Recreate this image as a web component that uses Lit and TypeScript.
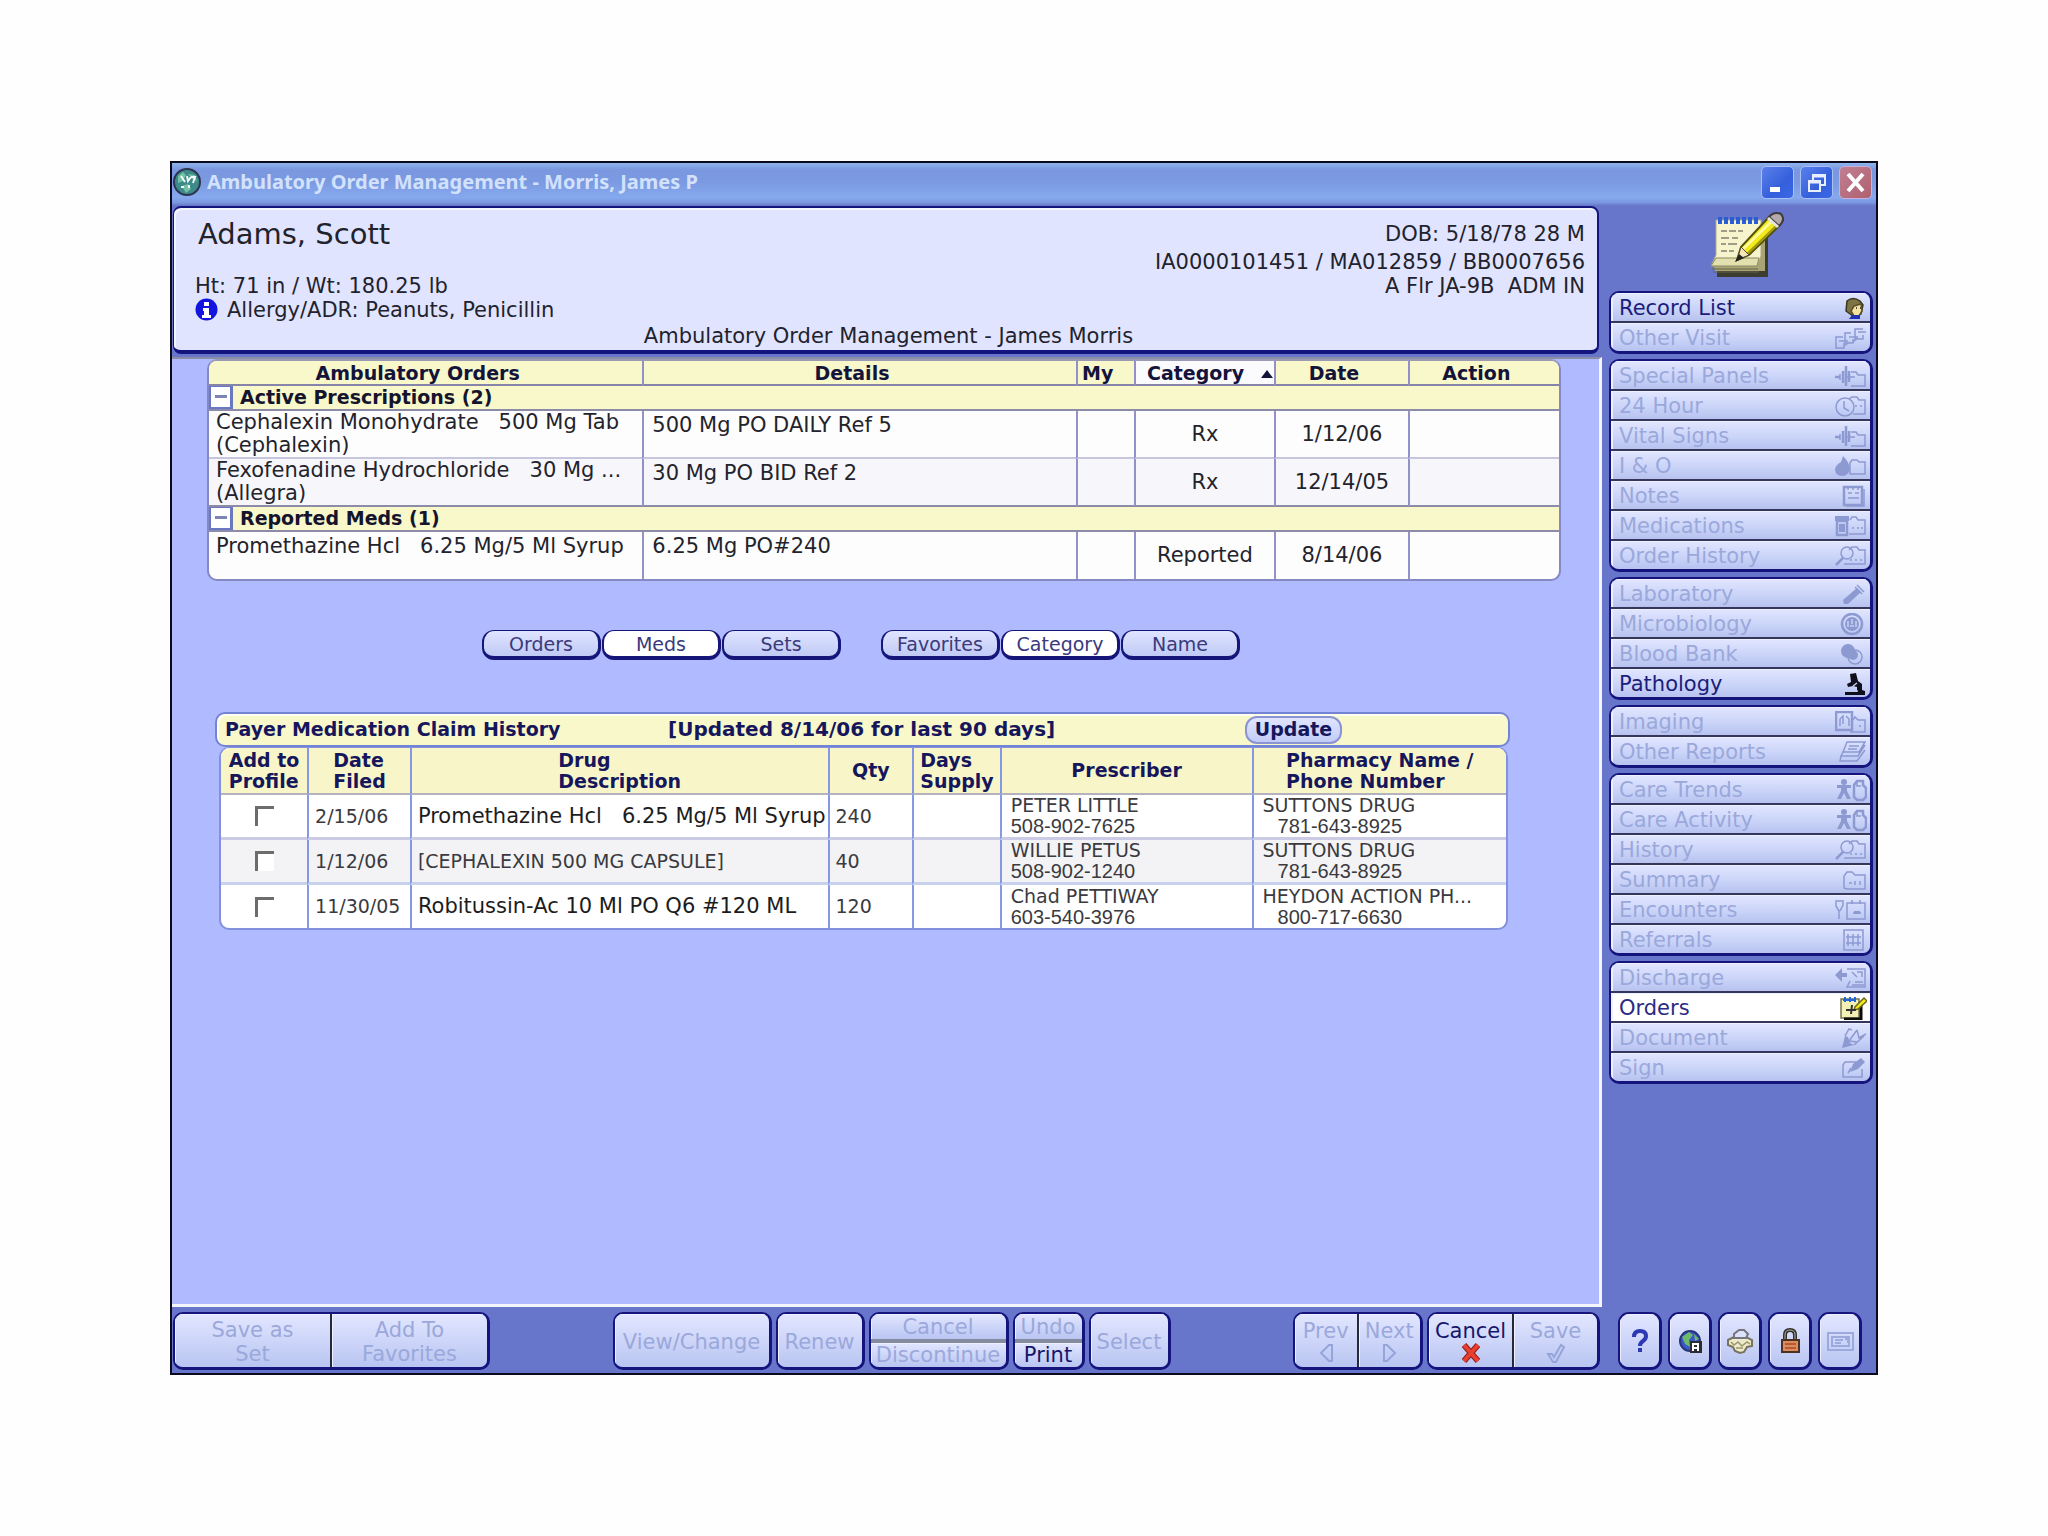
import { LitElement, html, css, svg, nothing, TemplateResult } from "lit";
import { customElement, property } from "lit/decorators.js";
import { classMap } from "lit/directives/class-map.js";

const folder = svg`<path d="M15 19V8l2-3h5l2 2h6v12z" />`;
const person = svg`<g class="fill"><circle cx="9" cy="3" r="3" /><path d="M2 6h14v3h-4v3l4 8h-4l-3-6-3 6H2l4-8V9H2z" /></g><path class="thick" d="M19 6l3-4h6v4l3 3v9l-3 3h-6l-3-3z" /><path d="M22 2v5h4" />`;
const pulse = svg`<path class="thick" d="M0 12h5M8 6v12M11 1v20M14 6v11" /><path d="M5 9v6M11 12h9" /><path d="M16 7h5l2 3h7v11H16" />`;
const lens = svg`<circle cx="12" cy="8" r="6" /><path class="thick" d="M8 13l-7 7" /><path d="M14 5l3-3h5l2 3h6v14H9M15 15h2M20 15h2M25 15h2" />`;

const NAV_ICONS: Record<string, TemplateResult> = {
  face: svg`<path d="M12 4q6-5 13 0l3 4-2 9-8 2-7-5z" fill="#7c7444" stroke="#3c361c" /><path d="M19 9l7-2 1 7-3 5h-5l-3-5z" fill="#f3e2a0" stroke="#5c5028" /><path d="M14 22l3-4h8v4z" fill="#2030b0" stroke="none" /><path d="M21 11h1M25 11h1" stroke="#222" />`,
  visits: svg`<path d="M8 10H1v11h8v-5M16 6h-6v10h8v-4M28 2h-8v10h8V8M4 14h9M14 10h9M23 5h8M9 19l6-4M18 15l5-4" />`,
  pulse,
  clock: svg`<circle cx="10" cy="12" r="9" /><path d="M9 6v7l5 3" /><path d="M14 4l3-2h5l2 3h6v14H18M20 11h2M25 11h2" />`,
  drop: svg`<path class="fill" d="M8 1q6 6 7 12-1 8-8 8T0 14q1-4 6-7z" />${folder}`,
  note: svg`<path class="thick" d="M9 2h18v18H9z" /><path d="M29 4v17H11M13 8h4M20 8h4M13 13h11M13 1v4M18 1v4M23 1v4" />`,
  bottle: svg`<path class="fill" d="M0 1h14v5H0z" /><path class="thick" d="M2 6h10v14H2zM4 10h6" /><path class="fill" d="M4 11h6v6H4z" /><path d="M14 19h16V5h-7l-2-3h-4l-2 3M17 13h2M22 13h2M26 13h2" />`,
  lens,
  tube: svg`<path class="fill" d="M22 5l4 4-13 12h-4l-1-4z" /><path d="M20 4l7 7M22 2l7 7M12 16l8-8" />`,
  dish: svg`<circle class="thick" cx="17" cy="11" r="10" /><circle class="fill" cx="17" cy="11" r="7" /><path class="cut" d="M13 8v6M17 6v5M21 8v6M15 13h4" />`,
  cells: svg`<circle class="fill" cx="13" cy="8" r="7" /><circle cx="20" cy="14" r="7" /><circle class="fill" cx="18" cy="12" r="5" />`,
  scope: svg`<path d="M15 1l6-1 2 8 4 3v6l3 1v4H10v-3h12v-5l-4-1-5 1-1-3 4-2z" fill="#10101c" stroke="none" /><path d="M18 13l4-3M17 18h6" stroke="#c8cdea" />`,
  scan: svg`<path class="thick" d="M1 1h16v18H1z" /><path d="M5 15V8l3-3v8M11 5l3 3v7" /><path d="M18 9l2-3 3 3h7v12H15" /><path d="M24 15h2" />`,
  papers: svg`<path d="M12 1h18l-6 10H8zM8 11l-2 4h17l7-11M6 15l-1 5h17l8-11M14 5h10M13 8h9" />`,
  person,
  summary: svg`<path d="M9 19V7l3-4h5l3 3h10v14H12zM14 14h3M20 12v4M25 12v4" />`,
  encounter: svg`<path d="M1 1v6l3 5v8M8 1v5l-3 6M2 2h5M12 4h18v16H12zM17 1v4M25 1v4M18 14h8" /><path class="fill" d="M19 12h6v3h-6z" />`,
  grid: svg`<path d="M9 1h19v20H9zM13 5v12M18 5v12M23 5v12M11 8h15M11 14h15" />`,
  leave: svg`<path class="fill" d="M0 8l7-7v5h5v4H7v5z" /><path d="M12 2h18v18H12l3-6M17 5l5 5M22 5h5v5M20 15h8M17 18h12" />`,
  orders: svg`<path d="M6 2h18v19H6z" fill="#f2f0b4" stroke="#77744c" /><path d="M9 22h17V8" stroke="#0c0c0c" stroke-width="3" /><path d="M8 3h13M10 0v5M15 0v5M20 0v5" stroke="#2466d8" stroke-width="2" /><path d="M29 1l3 3-9 8-4 1 1-3z" fill="#f5ee18" stroke="#6c6820" /><path d="M11 13h10M17 8l-1 9" stroke="#333" stroke-width="2" />`,
  pen: svg`<path class="fill" d="M7 21l3-12 3 1 2 6 4 2z" /><path d="M10 9l4-7 3 1M14 14l8-11M19 18l10-9M22 3l2 8 7-4M14 14l8 1" />`,
  sign: svg`<path d="M22 5H10l-2 3v12h19V12M13 16l3-5" /><path class="fill" d="M15 15l3-8 8-6 4 4-7 7z" />`,
};

@customElement("nav-icon")
class NavIcon extends LitElement {
  @property() name = "";
  static styles = css`
    :host { display: block; width: 32px; height: 23px; flex: none; }
    svg { display: block; width: 32px; height: 23px; fill: none; stroke: #8d9ad2; stroke-width: 1.5; }
    .fill { fill: #8d9ad2; stroke: none; }
    .thick { stroke-width: 2.5; }
    .cut { stroke: #c6cff6; }
  `;
  render() {
    return html`<svg viewBox="0 0 32 23" aria-hidden="true">${NAV_ICONS[this.name]}</svg>`;
  }
}

type NavItem = { label: string; icon: string; state?: "on" | "current" };
const NAV: NavItem[][] = [
  [{ label: "Record List", icon: "face", state: "on" }, { label: "Other Visit", icon: "visits" }],
  [
    { label: "Special Panels", icon: "pulse" },
    { label: "24 Hour", icon: "clock" },
    { label: "Vital Signs", icon: "pulse" },
    { label: "I & O", icon: "drop" },
    { label: "Notes", icon: "note" },
    { label: "Medications", icon: "bottle" },
    { label: "Order History", icon: "lens" },
  ],
  [
    { label: "Laboratory", icon: "tube" },
    { label: "Microbiology", icon: "dish" },
    { label: "Blood Bank", icon: "cells" },
    { label: "Pathology", icon: "scope", state: "on" },
  ],
  [{ label: "Imaging", icon: "scan" }, { label: "Other Reports", icon: "papers" }],
  [
    { label: "Care Trends", icon: "person" },
    { label: "Care Activity", icon: "person" },
    { label: "History", icon: "lens" },
    { label: "Summary", icon: "summary" },
    { label: "Encounters", icon: "encounter" },
    { label: "Referrals", icon: "grid" },
  ],
  [
    { label: "Discharge", icon: "leave" },
    { label: "Orders", icon: "orders", state: "current" },
    { label: "Document", icon: "pen" },
    { label: "Sign", icon: "sign" },
  ],
];

@customElement("side-nav")
class SideNav extends LitElement {
  static styles = css`
    :host { display: flex; flex-direction: column; gap: 5px; font-family: "DejaVu Sans", Verdana, sans-serif; }
    .group {
      display: flex; flex-direction: column; overflow: hidden;
      border: solid #14147c; border-width: 2px 3px 3px 2px; border-radius: 10px;
    }
    .item {
      display: flex; align-items: center; justify-content: space-between;
      box-sizing: border-box; height: 30px; margin: 0; padding: 2px 3px 0 8px;
      border: 0; border-bottom: 2px solid #34365c;
      background: linear-gradient(#e2e6ff, #c9d3f8 60%, #b7c2ef);
      box-shadow: inset 2px 1px #eef0ff;
      font: inherit; font-size: 21px; line-height: 24px; color: #9ba8db; white-space: nowrap;
    }
    .item:last-child { height: 28px; border-bottom: 0; }
    .on { color: #1c1c7a; }
    .current { background: #fff; color: #2a2a84; }
  `;
  render() {
    return NAV.map(
      (group) => html`<div class="group">
        ${group.map(
          (i) => html`<button
            class=${classMap({ item: true, on: i.state === "on", current: i.state === "current" })}
            ?disabled=${!i.state}
          ><span>${i.label}</span><nav-icon name=${i.icon}></nav-icon></button>`,
        )}
      </div>`,
    );
  }
}

type Order = { name: string; alias?: string; details: string; category: string; date: string };
const ORDER_GROUPS: { title: string; rows: Order[] }[] = [
  {
    title: "Active Prescriptions (2)",
    rows: [
      { name: "Cephalexin Monohydrate   500 Mg Tab", alias: "(Cephalexin)", details: "500 Mg PO DAILY Ref 5", category: "Rx", date: "1/12/06" },
      { name: "Fexofenadine Hydrochloride   30 Mg ...", alias: "(Allegra)", details: "30 Mg PO BID Ref 2", category: "Rx", date: "12/14/05" },
    ],
  },
  {
    title: "Reported Meds (1)",
    rows: [{ name: "Promethazine Hcl   6.25 Mg/5 Ml Syrup", details: "6.25 Mg PO#240", category: "Reported", date: "8/14/06" }],
  },
];

@customElement("orders-table")
class OrdersTable extends LitElement {
  static styles = css`
    :host { display: block; font-family: "DejaVu Sans", Verdana, sans-serif; font-size: 21px; line-height: 23px; color: #23232b; }
    .frame { border: 2px solid #8488c4; border-top-color: #9a9ab4; border-radius: 10px; overflow: hidden; background: #fdfdfd; }
    table { width: 100%; table-layout: fixed; border-collapse: separate; border-spacing: 0; }
    .c-name { width: 32.1%; } .c-details { width: 32.1%; } .c-my { width: 4.3%; }
    .c-cat { width: 10.4%; } .c-date { width: 9.9%; } .c-act { width: 11.2%; }
    th, td { box-sizing: border-box; padding: 0; }
    thead th {
      height: 25px; padding: 2px 16px 0 0; background: #f8f8ca; color: #14143a;
      border-bottom: 2px solid #8684a8; font-size: 19px; line-height: 21px; font-weight: 700; white-space: nowrap;
    }
    thead .sorted { padding-right: 0; background: #fbfbfe; }
    .sort { display: flex; align-items: center; justify-content: flex-end; gap: 17px; width: 100%; margin: 0; padding: 0 1px; border: 0; background: none; font: inherit; color: inherit; }
    .sort svg { width: 12px; height: 8px; }
    .group th { height: 25px; background: #f8f8ca; border-bottom: 2px solid #8c8ca8; font-size: 19px; line-height: 21px; text-align: left; color: #14142c; }
    .title { display: flex; align-items: center; gap: 7px; height: 23px; }
    .toggle {
      box-sizing: border-box; width: 24px; height: 23px; margin: 0; padding: 0;
      display: flex; align-items: center; justify-content: center;
      border: solid #6a78c4; border-width: 1px 3px 2px 2px; background: #fff;
    }
    .toggle svg { width: 12px; height: 4px; }
    tbody td { height: 48px; vertical-align: middle; text-align: center; border-bottom: 2px solid #c6c6dc; }
    .last td { border-bottom-color: #8c8ca8; }
    .end td { height: 47px; border-bottom: 0; }
    .alt td { background: #f7f7fb; }
    thead th + th, tbody td + td { border-left: 2px solid #9292c8; }
    tbody .text { text-align: left; vertical-align: top; white-space: pre; overflow: hidden; }
    .two { height: 46px; padding-left: 7px; overflow: hidden; }
    .one { padding: 3px 0 0 8px; }
    .two.one { height: 43px; padding-left: 7px; }
  `;
  render() {
    return html`<div class="frame"><table>
      <colgroup><col class="c-name" /><col class="c-details" /><col class="c-my" /><col class="c-cat" /><col class="c-date" /><col class="c-act" /></colgroup>
      <thead><tr>
        <th scope="col">Ambulatory Orders</th><th scope="col">Details</th><th scope="col">My</th>
        <th scope="col" class="sorted" aria-sort="ascending"><button class="sort">Category<svg viewBox="0 0 12 8" aria-hidden="true"><path d="M6 0l6 8H0z" fill="#14143a" /></svg></button></th>
        <th scope="col">Date</th><th scope="col">Action</th>
      </tr></thead>
      ${ORDER_GROUPS.map(
        (g, gi) => html`<tbody>
          <tr class="group"><th colspan="6" scope="rowgroup"><div class="title">
            <button class="toggle" aria-label="Collapse ${g.title}"><svg viewBox="0 0 12 4" aria-hidden="true"><path d="M0 0h12v3H0z" fill="#7c84b8" /></svg></button>${g.title}
          </div></th></tr>
          ${g.rows.map(
            (r, i) => html`<tr class=${classMap({ alt: i % 2 === 1, last: i === g.rows.length - 1, end: gi === ORDER_GROUPS.length - 1 && i === g.rows.length - 1 })}>
              <td class="text"><div class=${r.alias ? "two" : "two one"}>${r.name}${r.alias ? html`<br />${r.alias}` : nothing}</div></td>
              <td class="text"><div class="one">${r.details}</div></td>
              <td></td><td>${r.category}</td><td>${r.date}</td><td></td>
            </tr>`,
          )}
        </tbody>`,
      )}
    </table></div>`;
  }
}

const CLAIMS = [
  { date: "2/15/06", drug: "Promethazine Hcl   6.25 Mg/5 Ml Syrup", qty: "240", doctor: "PETER LITTLE", phone: "508-902-7625", shop: "SUTTONS DRUG", shopPhone: "781-643-8925" },
  { date: "1/12/06", drug: "[CEPHALEXIN 500 MG CAPSULE]", small: true, qty: "40", doctor: "WILLIE PETUS", phone: "508-902-1240", shop: "SUTTONS DRUG", shopPhone: "781-643-8925" },
  { date: "11/30/05", drug: "Robitussin-Ac 10 Ml PO Q6 #120 ML", qty: "120", doctor: "Chad PETTIWAY", phone: "603-540-3976", shop: "HEYDON ACTION PH...", shopPhone: "800-717-6630" },
];

@customElement("claim-history")
class ClaimHistory extends LitElement {
  static styles = css`
    :host { display: block; font-family: "DejaVu Sans", Verdana, sans-serif; font-size: 19px; line-height: 21px; color: #3a3a40; }
    .bar {
      display: flex; align-items: center; box-sizing: border-box; height: 35px; padding: 0 166px 0 8px;
      border: 2px solid #7484d4; border-radius: 10px; background: #f8f8ca; box-shadow: inset 2px 2px #fdfdf0;
      font-weight: 700; color: #16165c; white-space: nowrap;
    }
    h2 { margin: 0; font: inherit; width: 443px; }
    .upd { flex: 1; font-size: 20px; }
    .update {
      box-sizing: border-box; height: 28px; width: 97px; margin: 0; padding: 0; border: 2px solid #8a94d4; border-radius: 12px;
      background: linear-gradient(#e0e5ff, #c2ccf6); font: inherit; color: #16165c;
    }
    .frame { margin: 0 2px 0 4px; border: 2px solid #8390de; border-top-width: 1px; border-radius: 10px; overflow: hidden; background: #fff; }
    table { width: 100%; table-layout: fixed; border-collapse: separate; border-spacing: 0; }
    .k-add { width: 6.7%; } .k-date { width: 8%; } .k-drug { width: 32.5%; } .k-qty { width: 6.6%; }
    .k-days { width: 6.8%; } .k-doc { width: 19.6%; } .k-shop { width: 19.8%; }
    th, td { box-sizing: border-box; padding: 0; white-space: pre; }
    th { height: 47px; background: #f8f6c8; border-bottom: 2px solid #b4b2bc; color: #16165c; font-weight: 700; }
    th span { display: inline-block; text-align: left; }
    td { height: 45px; border-bottom: 3px solid #cccbe6; }
    tr:last-child td { height: 43px; border-bottom: 0; }
    tr:nth-child(even) td { background: #f3f3f5; border-bottom-color: #c8d2ec; }
    thead th + th, tbody td + td { border-left: 2px solid #8498e4; }
    td.pick { text-align: center; }
    .date { padding-left: 6px; }
    .drug, .qty { padding-left: 6px; }
    .doc, .shop { padding-left: 9px; }
    .large { font-size: 21px; color: #1c1c20; }
    .phone { font-family: "Liberation Sans", Arial, sans-serif; font-size: 20px; }
    .shop .phone { padding-left: 15px; }
    .tick {
      appearance: none; display: block; box-sizing: border-box; width: 19px; height: 20px; margin: 0 auto;
      border: solid #6c6c6c; border-width: 3px 0 0 3px; background: #fff;
    }
  `;
  render() {
    return html`
      <div class="bar"><h2>Payer Medication Claim History</h2><span class="upd">[Updated 8/14/06 for last 90 days]</span><button class="update">Update</button></div>
      <div class="frame"><table>
        <colgroup><col class="k-add" /><col class="k-date" /><col class="k-drug" /><col class="k-qty" /><col class="k-days" /><col class="k-doc" /><col class="k-shop" /></colgroup>
        <thead><tr>
          ${[["Add to", "Profile"], ["Date", "Filed"], ["Drug", "Description"], ["Qty"], ["Days", "Supply"], ["Prescriber"], ["Pharmacy Name /", "Phone Number"]].map(
            (h) => html`<th scope="col"><span>${h[0]}${h[1] ? html`<br />${h[1]}` : nothing}</span></th>`,
          )}
        </tr></thead>
        <tbody>${CLAIMS.map(
          (c) => html`<tr>
            <td class="pick"><input class="tick" type="checkbox" aria-label="Add ${c.drug} to profile" /></td>
            <td class="date">${c.date}</td>
            <td class=${c.small ? "drug" : "drug large"}>${c.drug}</td>
            <td class="qty">${c.qty}</td><td></td>
            <td class="doc"><div>${c.doctor}</div><div class="phone">${c.phone}</div></td>
            <td class="shop"><div>${c.shop}</div><div class="phone">${c.shopPhone}</div></td>
          </tr>`,
        )}</tbody>
      </table></div>`;
  }
}

@customElement("app-root")
class AppRoot extends LitElement {
  static styles = css`
    :host {
      display: block; box-sizing: border-box; min-height: 100vh; padding: 161px 170px; background: #fefefe;
      font-family: "DejaVu Sans", Verdana, sans-serif; font-size: 21px; line-height: 24px; color: #22222c;
    }
    button { margin: 0; font: inherit; }
    .window {
      display: flex; flex-direction: column; box-sizing: border-box; min-height: calc(100vh - 322px);
      border: 2px solid #0a0a1c; background: #6776cb;
    }
    .titlebar {
      display: flex; align-items: center; gap: 6px; box-sizing: border-box; height: 43px; padding: 0 4px 5px 1px;
      background: linear-gradient(#8fb4ee, #7a97df 15%, #7b9ae1 45%, #86a9ee 80%, #7a96e0 92%, #6674c6);
    }
    .titlebar h1 { flex: 1; margin: 0; font: 700 20px/26px "Noto Sans", "Open Sans", sans-serif; color: #d3e2fc; white-space: nowrap; }
    .orb { width: 28px; height: 28px; }
    .winbtn {
      display: grid; place-items: center; box-sizing: border-box; width: 33px; height: 33px; padding: 0;
      border: 1px solid #a8c0f6; border-radius: 5px; background: linear-gradient(135deg, #5a80ea, #3560dc 60%, #3a68e4);
    }
    .close { background: linear-gradient(135deg, #c07f92, #b0606e); border-color: #c8b0dc; }
    .winbtn svg { width: 25px; height: 25px; }
    .body { flex: 1; display: grid; grid-template-columns: minmax(0, 1fr) 274px; }
    .left { display: flex; flex-direction: column; min-width: 0; }
    .patient {
      display: flex; flex-direction: column; margin: 0 3px 0 1px; box-sizing: border-box; height: 148px;
      border: solid #14147e; border-width: 2px 2px 4px 1px; border-radius: 8px; background: #e0e4ff;
      box-shadow: inset 2px 2px #f4f6ff;
    }
    .facts { display: flex; justify-content: space-between; flex: 1; padding: 9px 12px 0 21px; }
    .name { margin: 0 0 23px 3px; font-size: 29px; line-height: 34px; font-weight: 400; }
    p { margin: 0; white-space: pre; }
    .allergy { display: flex; align-items: center; gap: 9px; height: 23px; }
    .allergy svg { width: 23px; height: 23px; }
    .ids { padding-top: 5px; text-align: right; }
    .dob { padding-bottom: 4px; }
    .context { text-align: center; padding: 0 0 2px 6px; }
    .canvas {
      flex: 1; margin-top: 3px; padding: 0 38px 40px 35px; background: #b0baff;
      border: solid #f4f6ff; border-width: 2px 3px 3px 0; border-top-color: #8a8ea4;
    }
    .filters { display: flex; gap: 40px; margin: 49px 0 52px 275px; }
    .seg { display: flex; gap: 1px; }
    .pill {
      box-sizing: border-box; width: 119px; height: 30px; padding: 0; border: solid #16167a; border-width: 1px 3px 4px 2px;
      border-radius: 12px; background: linear-gradient(#dfe4ff, #c0caf5); font-size: 19px; line-height: 22px; color: #3a3a7c;
    }
    .chosen { background: #fff; }
    .claims { margin: 0 51px 0 8px; }
    .footer { display: flex; justify-content: space-between; padding: 5px 2px 3px 1px; height: 58px; }
    .cluster { display: flex; gap: 4px; }
    .box {
      display: flex; box-sizing: border-box; height: 58px; overflow: hidden;
      border: solid #14147c; border-width: 2px 3px 3px 2px; border-radius: 10px;
    }
    .box button {
      flex: 1; display: flex; flex-direction: column; align-items: center; justify-content: center; padding: 3px 0 0; border: 0;
      background: linear-gradient(#e2e6ff, #b9c5f2); color: #9ba8db; box-shadow: inset 1px 1px #eef0ff; white-space: nowrap;
    }
    .box button + button { border-left: 2px solid #26283c; }
    .box.stack { flex-direction: column; }
    .box.stack button { padding-top: 1px; }
    .box.stack button + button { padding: 0; border-left: 0; border-top: 4px solid #858b9e; }
    .box .live { color: #16166a; }
    .w317 { width: 317px; } .w159 { width: 159px; } .w89 { width: 89px; } .w140 { width: 140px; }
    .w72 { width: 72px; } .w82 { width: 82px; } .w130 { width: 130px; } .w173 { width: 173px; }
    .box svg { height: 22px; width: 22px; }
    .right { display: flex; flex-direction: column; padding: 0 3px 3px 7px; }
    .logo { display: block; width: 76px; height: 68px; margin: 5px 0 12px 100px; }
    .space { flex: 1; }
    .tools { display: flex; gap: 6px; padding-left: 9px; }
    .tool { width: 44px; border-radius: 11px; }
    .box.tool button { padding: 0; }
    .tool svg { width: 28px; height: 28px; }
  `;
  render() {
    return html`
      <main class="window">
        <header class="titlebar">
          <svg class="orb" viewBox="0 0 28 28" aria-hidden="true"><circle cx="14" cy="14" r="13" fill="#3c8a8a" stroke="#2c3450" stroke-width="2" /><path d="M5 8l5-4 3 3-3 6-5 2zM15 6l7 1 2 6-5-2zM9 18l6-2 3 5-5 4z" fill="#77c0a8" /><path d="M8 8l4 6M14 8l1 5 3-4M18 9h4l-2 6M8 19h3M16 17v3" fill="none" stroke="#f4faf8" stroke-width="2" /></svg>
          <h1>Ambulatory Order Management - Morris, James P</h1>
          <button class="winbtn" aria-label="Minimize"><svg viewBox="0 0 25 25"><path d="M5 17h10v5H5z" fill="#fff" /></svg></button>
          <button class="winbtn" aria-label="Restore"><svg viewBox="0 0 25 25" fill="none" stroke="#e8eefe" stroke-width="2"><path d="M5 11h11v10H5zM9 10V5h12v10h-4" /><path d="M5 12h11M9 6h12" stroke-width="3" /></svg></button>
          <button class="winbtn close" aria-label="Close"><svg viewBox="0 0 25 25"><path d="M5 4l15 17M20 4L5 21" stroke="#fff" stroke-width="4" /></svg></button>
        </header>
        <div class="body">
          <div class="left">
            <section class="patient">
              <div class="facts">
                <div>
                  <h2 class="name">Adams, Scott</h2>
                  <p>Ht: 71 in / Wt: 180.25 lb</p>
                  <p class="allergy"><svg viewBox="0 0 23 23" aria-hidden="true"><circle cx="11.5" cy="11.5" r="11" fill="#1414e0" /><path d="M9 4h5v4H9zM8 10h6v7h2v3H7v-3h2v-4H8z" fill="#fff" /></svg><span>Allergy/ADR: Peanuts, Penicillin</span></p>
                </div>
                <div class="ids">
                  <p class="dob">DOB: 5/18/78 28 M</p>
                  <p>IA0000101451 / MA012859 / BB0007656</p>
                  <p>A Flr JA-9B  ADM IN</p>
                </div>
              </div>
              <p class="context">Ambulatory Order Management - James Morris</p>
            </section>
            <section class="canvas">
              <orders-table></orders-table>
              <div class="filters">
                <div class="seg"><button class="pill">Orders</button><button class="pill chosen">Meds</button><button class="pill">Sets</button></div>
                <div class="seg"><button class="pill">Favorites</button><button class="pill chosen">Category</button><button class="pill">Name</button></div>
              </div>
              <claim-history class="claims"></claim-history>
            </section>
            <footer class="footer">
              <div class="box w317"><button disabled><span>Save as</span><span>Set</span></button><button disabled><span>Add To</span><span>Favorites</span></button></div>
              <div class="cluster">
                <div class="box w159"><button disabled>View/Change</button></div>
                <div class="box w89"><button disabled>Renew</button></div>
                <div class="box stack w140"><button disabled>Cancel</button><button disabled>Discontinue</button></div>
                <div class="box stack w72"><button disabled>Undo</button><button class="live">Print</button></div>
                <div class="box w82"><button disabled>Select</button></div>
              </div>
              <div class="cluster">
                <div class="box w130">
                  <button disabled>Prev<svg viewBox="0 0 22 22" fill="none" stroke="#96a4da" stroke-width="2"><path d="M17 2v16h-3l-8-8 8-8z" /></svg></button>
                  <button disabled>Next<svg viewBox="0 0 22 22" fill="none" stroke="#96a4da" stroke-width="2"><path d="M6 2v16h3l8-8-8-8z" /></svg></button>
                </div>
                <div class="box w173">
                  <button class="live">Cancel<svg viewBox="0 0 22 22"><path d="M4 2l14 16M18 2L4 18" stroke="#8c1c1c" stroke-width="6" /><path d="M4 2l14 16M18 2L4 18" stroke="#e8402c" stroke-width="4" /></svg></button>
                  <button disabled>Save<svg viewBox="0 0 22 22" fill="none" stroke="#96a4da" stroke-width="2"><path d="M3 11h4l2 3 7-12 3 2-8 15H8z" /></svg></button>
                </div>
              </div>
            </footer>
          </div>
          <aside class="right">
            <svg class="logo" viewBox="0 0 76 68" aria-hidden="true">
              <path d="M8 60h48V20h3v46H8z" fill="#3c3c30" /><path d="M4 52h46V10l6 4v46H6z" fill="#a8a474" />
              <path d="M7 9h45v36l-4 10H2l5-11z" fill="#f6f4cc" stroke="#b0ac84" />
              <path d="M2 55l5-8h43l-2 8z" fill="#e2e0ae" stroke="#8c8860" /><path d="M3 58h46M4 61h46" stroke="#66624a" />
              <path d="M11 6v7M17 6v7M23 6v7M29 6v7M35 6v7M41 6v7M47 6v7" stroke="#2a5ed4" stroke-width="4" />
              <path d="M12 20h6M20 20h7M29 20h5M12 27h8M23 27h6M12 33h5M19 33h9M12 40h6M20 40h5" stroke="#a09c88" stroke-width="2" />
              <path d="M60 6l10 9-30 29-12 5 4-13z" fill="#f2ea1c" stroke="#55520c" stroke-width="2" />
              <path d="M64 9l-30 29" stroke="#fffb9c" stroke-width="3" /><path d="M68 14L38 43" stroke="#a09a08" stroke-width="2" />
              <path d="M32 36l8 8-12 5z" fill="#f6e6b8" stroke="#4c4a34" /><path d="M30 43l5 4-9 4z" fill="#222" />
              <path d="M60 6q5-6 12-3 5 6-2 12z" fill="#b4aaaa" stroke="#403c3c" stroke-width="2" /><path d="M59 7l10 9" stroke="#e4e4e4" stroke-width="3" />
            </svg>
            <side-nav></side-nav>
            <div class="space"></div>
            <div class="tools">
              <div class="box tool"><button aria-label="Help"><svg viewBox="0 0 28 28"><path d="M8 10q0-6 6-6t6 5q0 3-3 5t-3 5M14 21v4" fill="none" stroke="#2c38b4" stroke-width="4" /></svg></button></div>
              <div class="box tool"><button aria-label="Web"><svg viewBox="0 0 28 28"><circle cx="14" cy="14" r="10" fill="#3a56c8" stroke="#28347c" stroke-width="2" /><path d="M6 10l7-5 4 3-4 5 1 7-5-3zM18 7l5 5-4 2z" fill="#6cb86c" /><path d="M14 14h12v12H14z" fill="#2c2c34" /><path d="M17 24v-7h5v7M17 21h5" fill="none" stroke="#fff" stroke-width="2" /></svg></button></div>
              <div class="box tool"><button aria-label="Messages"><svg viewBox="0 0 28 28"><path d="M2 13l6-3h12l6 3v6l-5 1-3 5-4 1-5-2-2-4-5-2z" fill="#eceacb" stroke="#77745e" stroke-width="2" /><path d="M8 11V7l5-4h5l4 4-2 4z" fill="#dbe2fc" stroke="#77747c" stroke-width="2" /><path d="M5 15l3 3 4-3 4 4 5-4 3 2M10 21h7" fill="none" stroke="#99966c" stroke-width="1.5" /></svg></button></div>
              <div class="box tool"><button aria-label="Lock"><svg viewBox="0 0 28 28"><path d="M9 13V8q0-5 5-5t5 5v5" fill="none" stroke="#33302c" stroke-width="4" /><path d="M9 13V8q0-5 5-5t5 5v5" fill="none" stroke="#b4b0a4" stroke-width="1" /><path d="M6 13h17v12H6z" fill="#e08a5c" stroke="#4c3224" stroke-width="2" /><path d="M9 17h11M9 21h11" stroke="#b05c38" stroke-width="2" /></svg></button></div>
              <div class="box tool"><button disabled aria-label="Mail"><svg viewBox="0 0 28 28"><path d="M2 6h25v17H2zM6 10h17v9H6z" fill="none" stroke="#9ca9dc" stroke-width="2" /><path d="M9 13h8M9 16h6M19 12h3v4" stroke="#9ca9dc" fill="none" stroke-width="2" /></svg></button></div>
            </div>
          </aside>
        </div>
      </main>
    `;
  }
}
